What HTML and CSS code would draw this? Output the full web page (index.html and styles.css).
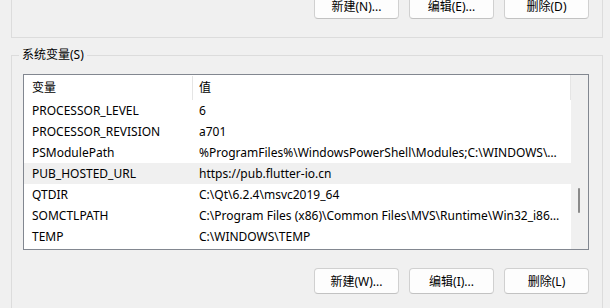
FILE: index.html
```html
<!doctype html>
<html>
<head>
<meta charset="utf-8">
<title>环境变量</title>
<link rel="stylesheet" href="styles.css">
</head>
<body>

<div class="group group-user">
	<div class="btn_row">
		<button class="btn">新建(N)...</button>
		<button class="btn">编辑(E)...</button>
		<button class="btn">删除(D)</button>
	</div>
</div>

<div class="group group-sys">
	<span class="legend">系统变量(S)</span>
	<div class="list">
		<div class="list_body">
			<div class="row head">
				<div class="col_name">变量</div>
				<div class="col_val">值</div>
			</div>
			<div class="row"><div class="col_name">PROCESSOR_LEVEL</div><div class="col_val">6</div></div>
			<div class="row"><div class="col_name">PROCESSOR_REVISION</div><div class="col_val">a701</div></div>
			<div class="row"><div class="col_name">PSModulePath</div><div class="col_val">%ProgramFiles%\WindowsPowerShell\Modules;C:\WINDOWS\system32\WindowsPowerShell\v1.0\Modules</div></div>
			<div class="row hover"><div class="col_name">PUB_HOSTED_URL</div><div class="col_val">https://pub.flutter-io.cn</div></div>
			<div class="row"><div class="col_name">QTDIR</div><div class="col_val">C:\Qt\6.2.4\msvc2019_64</div></div>
			<div class="row"><div class="col_name">SOMCTLPATH</div><div class="col_val">C:\Program Files (x86)\Common Files\MVS\Runtime\Win32_i86;C:\Program Files (x86)\Common Files\MVS\Runtime\Win64_x64</div></div>
			<div class="row"><div class="col_name">TEMP</div><div class="col_val">C:\WINDOWS\TEMP</div></div>
		</div>
		<div class="scrollbar"><div class="thumb"></div></div>
	</div>
	<div class="btn_row">
		<button class="btn">新建(W)...</button>
		<button class="btn">编辑(I)...</button>
		<button class="btn">删除(L)</button>
	</div>
</div>

</body>
</html>
```

FILE: styles.css
```css
*{ margin:0; padding:0; box-sizing:border-box;}
body{ background:#f0f0f0; font-family:"Noto Sans","Noto Sans CJK SC",sans-serif; font-size:12px; color:#000; overflow:hidden; height:308px;}

.group{ border:1px solid #dcdcdc; margin:0 7px 0 11px;}
.group-user{ margin-top:-8px; padding:0 13px 18px 0;}
.group-sys{ margin-top:17px; padding:0 13px 0 11px; height:254px;}
.legend{ display:block; width:fit-content; margin:-9px 0 0 -4px; padding:0 3px; background:#f0f0f0; line-height:16px;}

.btn_row{ display:flex; justify-content:flex-end; gap:10px;}
.group-sys .btn_row{ margin-top:18px;}
.btn{ width:85px; height:26px; background:#fdfdfd; border:1px solid #d0d0d0; border-bottom-color:#c2c2c2; border-radius:4px; font:inherit; color:#000;}

.list{ display:flex; margin-top:11px; height:176px; border:1px solid #828790; background:#fff;}
.list_body{ flex:1; min-width:0; overflow:hidden;}
.row{ display:flex; height:21px; line-height:21px; white-space:nowrap;}
.row.head{ height:25px; line-height:24px; border-right:1px solid #e5e5e5; padding-top:1px;}
.row.hover{ background:#f0f0f0;}
.col_name{ width:169px; padding-left:8px; flex:none;}
.head .col_name{ border-right:1px solid #e5e5e5;}
.col_val{ flex:1; min-width:0; padding:0 9px 0 6px; overflow:hidden; text-overflow:ellipsis;}

.scrollbar{ width:17px; flex:none; background:#f0f0f0;}
.thumb{ width:2px; height:25px; margin:113px 0 0 7px; background:#8a8a8a; border-radius:1px;}
```
